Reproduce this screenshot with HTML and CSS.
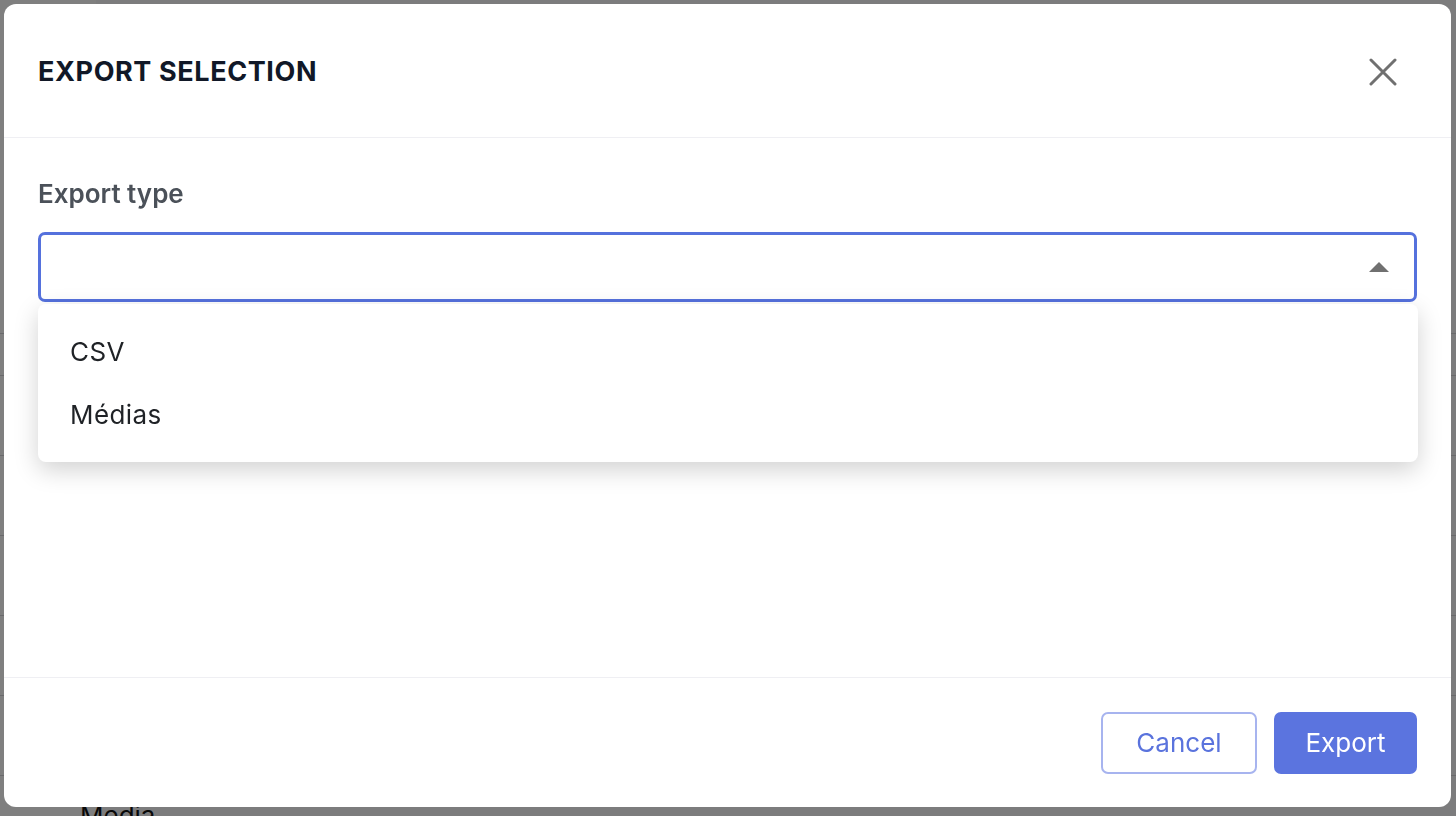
FILE: index.html
```html
<!DOCTYPE html>
<html lang="fr">
<head>
  <meta charset="UTF-8">
  <title>Export selection</title>
  <link rel="stylesheet" href="styles.css">
</head>
<body>

  <div class="page">
    <div class="page-head"></div>
    <div class="row short"></div>
    <div class="row"></div>
    <div class="row"></div>
    <div class="row"></div>
    <div class="row"></div>
    <div class="row"></div>
    <div class="row"><span class="cell">Media</span></div>
  </div>

  <div class="overlay">
    <div class="modal">
      <div class="modal-header">
        <h2>EXPORT SELECTION</h2>
        <button class="close-btn" aria-label="Close">
          <svg width="28" height="28" viewBox="0 0 28 28">
            <path d="M2 2 L26 26 M26 2 L2 26" stroke="#707070" stroke-width="3" stroke-linecap="round"/>
          </svg>
        </button>
      </div>

      <div class="modal-body">
        <label>Export type</label>
        <div class="field">
          <div class="select">
            <span class="caret"></span>
          </div>
          <ul class="dropdown">
            <li>CSV</li>
            <li>Médias</li>
          </ul>
        </div>
      </div>

      <div class="modal-footer">
        <button class="btn btn-outline">Cancel</button>
        <button class="btn btn-primary">Export</button>
      </div>
    </div>
  </div>

</body>
</html>
```

FILE: styles.css
```css
* {
  box-sizing: border-box;
}

html, body {
  margin: 0;
  height: 100%;
  overflow: hidden;
}

body {
  font-family: Inter, 'Noto Sans', sans-serif;
  background: #f8f8fb;
}

/* page behind the dialog */
.page {
  height: 100vh;
  background: linear-gradient(to right, #fff 96px, #f8f8fb 96px);
}

.page-head {
  height: 333px;
}

.row {
  height: 80px;
  border-top: 1px solid #d4d4d8;
  display: flex;
  align-items: center;
  padding-left: 80px;
  font-size: 26px;
  color: #111;
}

.row.short {
  height: 42px;
}

/* dialog */
.overlay {
  position: fixed;
  top: 0; left: 0; right: 0; bottom: 0;
  background: rgba(0, 0, 0, 0.5);
  padding: 4px 5px 9px 4px;
  display: flex;
}

.modal {
  flex: 1;
  background: #fff;
  border-radius: 12px;
  display: flex;
  flex-direction: column;
}

.modal-header {
  height: 134px;
  border-bottom: 1px solid #efeff3;
  display: flex;
  align-items: center;
  justify-content: space-between;
  padding: 2px 54px 0 34px;
}

.modal-header h2 {
  margin: 0;
  font-size: 27px;
  font-weight: 700;
  letter-spacing: 0.6px;
  color: #111827;
}

.close-btn {
  background: none;
  border: none;
  padding: 0;
  width: 28px;
  height: 28px;
  cursor: pointer;
}

.close-btn svg {
  display: block;
}

.modal-body {
  flex: 1;
  padding: 40px 34px 0 34px;
}

label {
  display: block;
  font-size: 26px;
  line-height: 32px;
  font-weight: 600;
  color: #4b5159;
  margin-bottom: 22px;
}

.field {
  position: relative;
}

.select {
  height: 70px;
  border: 3px solid #5571dd;
  border-radius: 7px;
  display: flex;
  align-items: center;
  justify-content: flex-end;
  padding-right: 25px;
}

.caret {
  width: 0;
  height: 0;
  border-left: 10px solid transparent;
  border-right: 10px solid transparent;
  border-bottom: 10px solid #707070;
}

.dropdown {
  position: absolute;
  top: calc(100% + 2px);
  left: 0;
  right: -1px;
  margin: 0;
  padding: 16px 0;
  list-style: none;
  background: #fff;
  border-radius: 8px;
  box-shadow: 0 8px 24px rgba(0, 0, 0, 0.18);
}

.dropdown li {
  height: 63px;
  line-height: 63px;
  padding-left: 32px;
  font-size: 26px;
  letter-spacing: 0.4px;
  color: #1f2226;
}

.modal-footer {
  height: 130px;
  border-top: 1px solid #efeff3;
  display: flex;
  align-items: center;
  justify-content: flex-end;
  gap: 17px;
  padding: 0 34px 0 0;
}

.btn {
  height: 62px;
  padding: 0;
  border-radius: 7px;
  font-family: inherit;
  font-size: 26px;
  cursor: pointer;
}

.btn-outline {
  width: 156px;
  background: #fff;
  border: 2px solid #a7b4ef;
  color: #5a73dd;
}

.btn-primary {
  width: 143px;
  background: #5b74df;
  border: 2px solid #5b74df;
  color: #fff;
}
```
